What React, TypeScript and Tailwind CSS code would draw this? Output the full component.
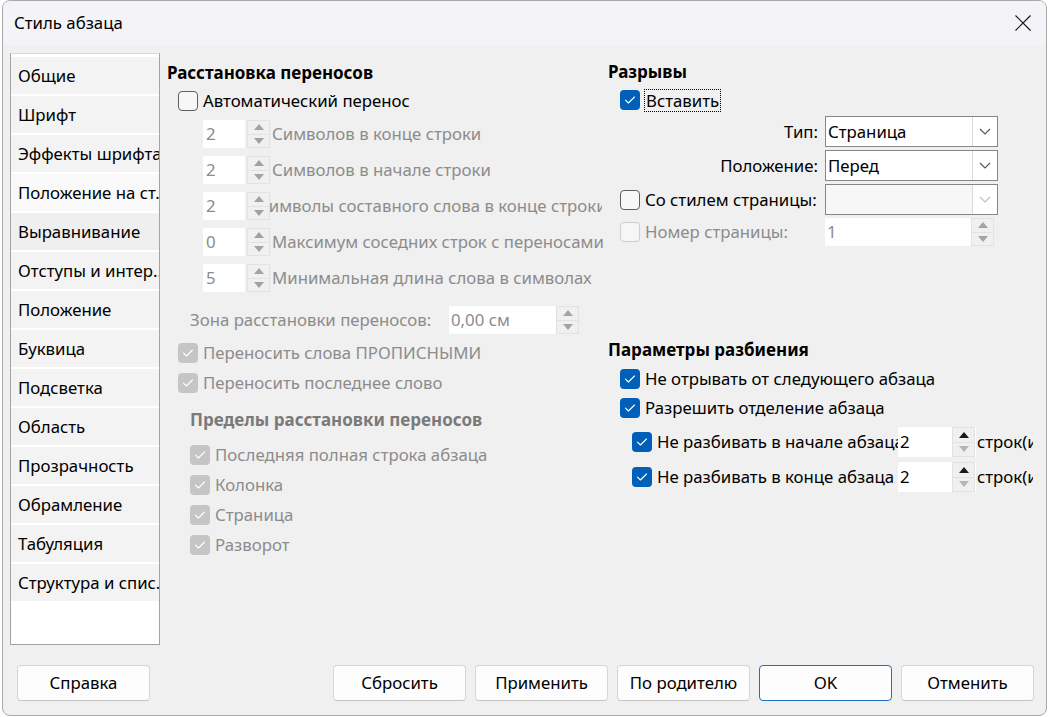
import React from "react";

type CS = "on" | "off" | "dison" | "disoff";

function CheckMark({ color = "#ffffff" }: { color?: string }) {
  return (
    <svg width="20" height="20" viewBox="0 0 20 20" fill="none">
      <path d="M5.5 10.2 L8.4 13 L14.5 7" stroke={color} strokeWidth="1.1" strokeLinecap="round" strokeLinejoin="round" />
    </svg>
  );
}

function Check({ s }: { s: CS }) {
  if (s === "on")
    return (
      <div className="w-5 h-5 shrink-0 rounded-[4px] bg-[#005fb8] flex items-center justify-center">
        <CheckMark />
      </div>
    );
  if (s === "dison")
    return (
      <div className="w-5 h-5 shrink-0 rounded-[4px] bg-[#c5c5c5] flex items-center justify-center">
        <CheckMark />
      </div>
    );
  if (s === "disoff")
    return <div className="w-5 h-5 shrink-0 rounded-[4px] border border-[#cdcdcd] bg-[#f6f6f6]" />;
  return <div className="w-5 h-5 shrink-0 rounded-[4px] border border-[#5f5f5f] bg-[#f7f7f7]" />;
}

function Tri({ up, color }: { up: boolean; color: string }) {
  return (
    <svg width="10" height="6" viewBox="0 0 10 6">
      {up ? <path d="M0 6 L5 0 L10 6 Z" fill={color} /> : <path d="M0 0 L10 0 L5 6 Z" fill={color} />}
    </svg>
  );
}

function SpinBtns({ upColor, downColor, h }: { upColor: string; downColor: string; h: string }) {
  return (
    <div className={`relative z-10 w-[23px] ${h} flex flex-col border border-[#e2e2e2] bg-[#f0f0f0]`}>
      <div className="flex-1 flex items-center justify-center border-b border-[#e2e2e2]">
        <Tri up color={upColor} />
      </div>
      <div className="flex-1 flex items-center justify-center">
        <Tri up={false} color={downColor} />
      </div>
    </div>
  );
}

function LeftSpin({ v, label, shift }: { v: string; label: string; shift?: boolean }) {
  return (
    <div className="flex items-center h-7 mt-2 pl-[36px]">
      <div className="w-[42px] h-7 bg-white text-[#8c8c8c] pl-[3px] leading-7 shrink-0">{v}</div>
      <div className="ml-[2px] shrink-0">
        <SpinBtns upColor="#a3a3a3" downColor="#a3a3a3" h="h-7" />
      </div>
      <div className={`text-[#8c8c8c] whitespace-nowrap overflow-hidden shrink-0 ${shift ? "-ml-[12px] w-[344px]" : "ml-[2px] w-[336px]"}`}>
        {label}
      </div>
    </div>
  );
}

function Chevron({ color }: { color: string }) {
  return (
    <svg width="12" height="7" viewBox="0 0 12 7" fill="none">
      <path d="M1 1 L6 6 L11 1" stroke={color} strokeWidth="1.1" />
    </svg>
  );
}

function Combo({ text, disabled }: { text?: string; disabled?: boolean }) {
  return (
    <div className={`w-[173px] h-[31px] border border-[#868686] flex ${disabled ? "bg-[#f7f7f7]" : "bg-white"}`}>
      <div className="flex-1 pl-[2px] leading-[29px] text-black">{text}</div>
      <div className="w-[25px] border-l border-[#dadada] flex items-center justify-center bg-white">
        <Chevron color={disabled ? "#c0c0c0" : "#555555"} />
      </div>
    </div>
  );
}

function RightSpin({ label }: { label: string }) {
  return (
    <div className="flex items-center h-[30px] pl-6">
      <Check s="on" />
      <div className="ml-[5px] w-[241px] shrink-0 whitespace-nowrap overflow-hidden">{label}</div>
      <div className="w-[78px] h-[30px] bg-white flex shrink-0">
        <div className="flex-1 pl-[2px] leading-[30px]">2</div>
        <div className="mr-[1px]">
          <SpinBtns upColor="#1a1a1a" downColor="#b5b5b5" h="h-[30px]" />
        </div>
      </div>
      <div className="ml-[1px] whitespace-nowrap shrink-0">строк(и)</div>
    </div>
  );
}

const tabs = [
  "Общие",
  "Шрифт",
  "Эффекты шрифта",
  "Положение на ст.",
  "Выравнивание",
  "Отступы и интер..",
  "Положение",
  "Буквица",
  "Подсветка",
  "Область",
  "Прозрачность",
  "Обрамление",
  "Табуляция",
  "Структура и спис.",
];

function Btn({ label, primary, w = "w-[133px]" }: { label: string; primary?: boolean; w?: string }) {
  return (
    <div
      className={`${w} h-[36px] rounded-[4px] bg-[#fdfdfd] border ${primary ? "border-[#1f6fc4]" : "border-[#d6d6d6] border-b-[#c4c4c4]"} flex items-center justify-center text-black`}
    >
      {label}
    </div>
  );
}

export default function App() {
  return (
    <div className="w-[1049px] h-[717px] bg-white overflow-hidden font-['Noto_Sans',sans-serif] text-[16.8px] text-black">
      <div className="ml-[2px] w-[1045px] h-[716px] border border-[#a9a9a9] rounded-[8px] bg-[#f0f0f0] flex flex-col overflow-hidden">
        {/* title bar */}
        <div className="h-[44px] bg-[#f3f3f8] flex items-center justify-between shrink-0">
          <div className="pl-[11px]">Стиль абзаца</div>
          <div className="pr-[14px]">
            <svg width="18" height="18" viewBox="0 0 18 18" fill="none">
              <path d="M1.5 1.5 L16.5 16.5 M16.5 1.5 L1.5 16.5" stroke="#1a1a1a" strokeWidth="1.2" />
            </svg>
          </div>
        </div>

        {/* body */}
        <div className="flex pt-[8px] pl-[7px] h-[601px]">
          {/* tab list */}
          <div className="w-[150px] h-[592px] border border-[#a3a3a3] border-t-[#d8d8d8] bg-white pt-[1px] flex flex-col shrink-0">
            {tabs.map((t, i) => (
              <div
                key={t}
                className={`h-[37px] mt-[2px] shrink-0 flex items-center pl-[7px] whitespace-nowrap overflow-hidden ${
                  i === 3 ? "bg-[#f9f9f9]" : i === 4 ? "bg-[#efefef]" : "bg-[#f3f3f3]"
                }`}
              >
                {t}
              </div>
            ))}
          </div>

          {/* left column */}
          <div className="w-[441px] ml-[7px] flex flex-col shrink-0 overflow-hidden">
            <div className="mt-[10px] h-5 leading-5 font-bold text-[17px]">Расстановка переносов</div>
            <div className="mt-[8px] h-5 flex items-center pl-[11px]">
              <Check s="off" />
              <div className="ml-[5px]">Автоматический перенос</div>
            </div>
            <div className="mt-[1px]">
              <LeftSpin v="2" label="Символов в конце строки" />
              <LeftSpin v="2" label="Символов в начале строки" />
              <LeftSpin v="2" label="Символы составного слова в конце строки" shift />
              <LeftSpin v="0" label="Максимум соседних строк с переносами" />
              <LeftSpin v="5" label="Минимальная длина слова в символах" />
            </div>
            <div className="mt-[14px] h-7 flex items-center pl-[23px]">
              <div className="w-[259px] text-[#8c8c8c] whitespace-nowrap">Зона расстановки переносов:</div>
              <div className="w-[107px] h-7 bg-white text-[#8c8c8c] pl-[2px] leading-7">0,00 см</div>
              <SpinBtns upColor="#a3a3a3" downColor="#a3a3a3" h="h-7" />
            </div>
            <div className="mt-[9px] h-5 flex items-center pl-[11px] text-[#8c8c8c]">
              <Check s="dison" />
              <div className="ml-[5px]">Переносить слова ПРОПИСНЫМИ</div>
            </div>
            <div className="mt-[10px] h-5 flex items-center pl-[11px] text-[#8c8c8c]">
              <Check s="dison" />
              <div className="ml-[5px]">Переносить последнее слово</div>
            </div>
            <div className="mt-[17px] h-5 leading-5 pl-[23px] font-bold text-[17px] text-[#7a7a7a]">Пределы расстановки переносов</div>
            {["Последняя полная строка абзаца", "Колонка", "Страница", "Разворот"].map((t, i) => (
              <div key={t} className={`${i === 0 ? "mt-[15px]" : "mt-[10px]"} h-5 flex items-center pl-[23px] text-[#8c8c8c]`}>
                <Check s="dison" />
                <div className="ml-[5px]">{t}</div>
              </div>
            ))}
          </div>

          {/* right column */}
          <div className="w-[425px] flex flex-col overflow-hidden shrink-0">
            <div className="mt-[9px] h-5 leading-5 font-bold text-[17px]">Разрывы</div>
            <div className="mt-[8px] h-5 flex items-center pl-3">
              <Check s="on" />
              <div className="ml-[4px] h-[23px] leading-[21px] px-[1px] border border-dotted border-black">Вставить</div>
            </div>
            <div className="mt-[6px] flex items-center">
              <div className="w-[210px] text-right">Тип:</div>
              <div className="ml-[7px]">
                <Combo text="Страница" />
              </div>
            </div>
            <div className="mt-[3px] flex items-center">
              <div className="w-[210px] text-right">Положение:</div>
              <div className="ml-[7px]">
                <Combo text="Перед" />
              </div>
            </div>
            <div className="mt-[3px] flex items-center">
              <div className="w-[210px] flex items-center pl-3">
                <Check s="off" />
                <div className="ml-[5px] whitespace-nowrap">Со стилем страницы:</div>
              </div>
              <div className="ml-[7px]">
                <Combo disabled />
              </div>
            </div>
            <div className="mt-[3px] flex items-center h-7">
              <div className="w-[210px] flex items-center pl-3 text-[#8c8c8c]">
                <Check s="disoff" />
                <div className="ml-[5px] whitespace-nowrap">Номер страницы:</div>
              </div>
              <div className="ml-[7px] w-[146px] h-7 bg-white text-[#8c8c8c] pl-[2px] leading-7">1</div>
              <SpinBtns upColor="#a3a3a3" downColor="#a3a3a3" h="h-7" />
            </div>

            <div className="mt-[94px] h-5 leading-5 font-bold text-[17px]">Параметры разбиения</div>
            <div className="mt-[9px] h-5 flex items-center pl-3">
              <Check s="on" />
              <div className="ml-[5px]">Не отрывать от следующего абзаца</div>
            </div>
            <div className="mt-[9px] h-5 flex items-center pl-3">
              <Check s="on" />
              <div className="ml-[5px]">Разрешить отделение абзаца</div>
            </div>
            <div className="mt-[9px]">
              <RightSpin label="Не разбивать в начале абзаца" />
            </div>
            <div className="mt-[5px]">
              <RightSpin label="Не разбивать в конце абзаца" />
            </div>
          </div>
        </div>

        {/* buttons */}
        <div className="flex items-center mt-[19px] pl-[14px] pr-[12px]">
          <Btn label="Справка" />
          <div className="flex-1" />
          <div className="flex gap-[9px]">
            <Btn label="Сбросить" />
            <Btn label="Применить" />
            <Btn label="По родителю" />
            <Btn label="OK" primary />
            <Btn label="Отменить" />
          </div>
        </div>
      </div>
    </div>
  );
}
